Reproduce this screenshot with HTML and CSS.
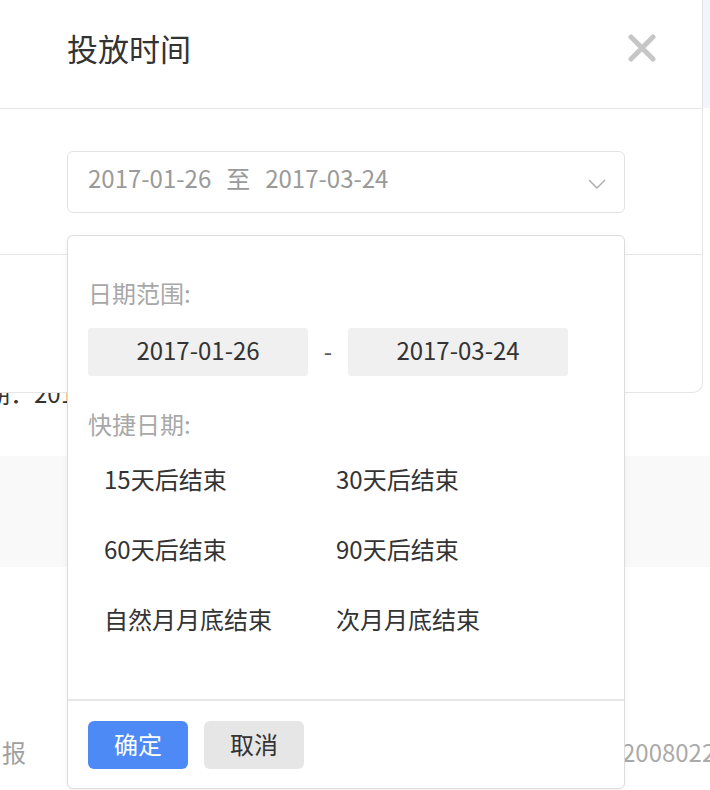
FILE: index.html
```html
<!DOCTYPE html>
<html lang="zh-CN">
<head>
  <meta charset="UTF-8" />
  <meta name="viewport" content="width=device-width, initial-scale=1.0"/>
  <title>投放时间</title>
  <link rel="stylesheet" href="styles.css">
</head>
<body>
  <div class="page">
    <div class="top">
      <div class="modal">
        <div class="modal-header">
          <h1 class="modal-title">投放时间</h1>
          <button class="close" aria-label="关闭">
            <svg width="28" height="28" viewBox="0 0 28 28">
              <path d="M3 3 L25 25 M25 3 L3 25" stroke="#c6c6c6" stroke-width="5" stroke-linecap="round" fill="none"/>
            </svg>
          </button>
        </div>
        <div class="modal-body">
          <div class="select" id="select">
            <span class="select-value">2017-01-26<span class="sep">至</span>2017-03-24</span>
            <svg class="chevron" width="18" height="10" viewBox="0 0 18 10">
              <polyline points="1,1 9,9 17,1" stroke="#aaa" stroke-width="1.4" fill="none"/>
            </svg>
          </div>
        </div>
        <div class="modal-section"></div>
      </div>
      <div class="side">
        <div class="side-head"></div>
      </div>
    </div>

    <div class="meta"><span>日期：2017-01-26</span></div>
    <div class="band"></div>
    <div class="foot">
      <span class="foot-left">报</span>
      <span class="foot-right">20080222</span>
    </div>

    <!-- date range dropdown -->
    <div class="popup" id="popup">
      <div class="popup-body">
        <div class="label">日期范围:</div>
        <div class="range">
          <div class="date-box">2017-01-26</div>
          <span class="dash">-</span>
          <div class="date-box">2017-03-24</div>
        </div>
        <div class="label label-quick">快捷日期:</div>
        <div class="quick">
          <div class="quick-item">15天后结束</div>
          <div class="quick-item">30天后结束</div>
          <div class="quick-item">60天后结束</div>
          <div class="quick-item">90天后结束</div>
          <div class="quick-item">自然月月底结束</div>
          <div class="quick-item">次月月底结束</div>
        </div>
      </div>
      <div class="popup-footer">
        <button class="btn btn-primary">确定</button>
        <button class="btn btn-default">取消</button>
      </div>
    </div>
  </div>
</body>
</html>
```

FILE: styles.css
```css
* {
  box-sizing: border-box;
}

body {
  margin: 0;
  width: 710px;
  height: 790px;
  overflow: hidden;
  background: #fff;
  font-family: 'Noto Sans CJK SC', 'Noto Sans', sans-serif;
  font-size: 24px;
  color: #333;
}

.page {
  position: relative;
  height: 790px;
}

.top {
  display: flex;
}

.modal {
  width: 703px;
  border-right: 1px solid #e6e6e6;
  border-bottom: 1px solid #e6e6e6;
  border-bottom-right-radius: 10px;
}

.modal-header {
  height: 109px;
  display: flex;
  justify-content: space-between;
  padding: 30px 46px 0 67px;
  border-bottom: 1px solid #e6e6e6;
}

.modal-title {
  margin: 0;
  font-size: 31px;
  font-weight: 400;
  line-height: 36px;
  color: #333;
}

.close {
  border: none;
  background: none;
  padding: 0;
  width: 28px;
  height: 28px;
  margin-top: 4px;
  cursor: pointer;
}

.modal-body {
  padding: 42px 0 41px 67px;
  border-bottom: 1px solid #e6e6e6;
}

.select {
  width: 558px;
  height: 62px;
  border: 1px solid #e3e3e3;
  border-radius: 6px;
  display: flex;
  align-items: center;
  justify-content: space-between;
  padding: 0 18px 8px 20px;
}

.select-value {
  color: #9a9a9a;
  line-height: 30px;
}

.sep {
  margin: 0 15px;
}

.chevron {
  margin-top: 12px;
}

.modal-section {
  height: 137px;
}

.side {
  flex: 1;
}

.side-head {
  height: 108px;
  background: #f2f6fc;
}

.meta {
  height: 12px;
  overflow: hidden;
  display: flex;
  align-items: flex-end;
  margin-left: -38px;
}

.meta span {
  line-height: 24px;
  white-space: nowrap;
}

.band {
  margin-top: 51px;
  height: 111px;
  background: #f9f9f9;
}

.foot {
  margin-top: 170px;
  display: grid;
  grid-template-columns: 622px 1fr;
  line-height: 30px;
  color: #a0a0a0;
  white-space: nowrap;
  overflow: hidden;
}

.foot-left {
  padding-left: 2px;
}

.foot-right {
  color: #aaa;
}

/* dropdown */
.popup {
  position: absolute;
  left: 67px;
  top: 235px;
  width: 558px;
  height: 554px;
  background: #fff;
  border: 1px solid #dcdcdc;
  border-radius: 6px;
  box-shadow: 0 2px 6px rgba(0, 0, 0, 0.05);
  display: flex;
  flex-direction: column;
}

.popup-body {
  flex: 1;
  padding: 40px 20px 0 20px;
}

.label {
  color: #a8a8a8;
  line-height: 34px;
}

.range {
  display: flex;
  align-items: center;
  margin-top: 18px;
}

.date-box {
  width: 220px;
  height: 48px;
  background: #f0f0f0;
  border-radius: 3px;
  display: flex;
  align-items: center;
  justify-content: center;
  padding-bottom: 6px;
  color: #333;
}

.dash {
  width: 40px;
  text-align: center;
  color: #555;
  padding-bottom: 4px;
}

.label-quick {
  margin-top: 31px;
}

.quick {
  display: grid;
  grid-template-columns: 232px 232px;
  margin-top: 3px;
  padding-left: 16px;
}

.quick-item {
  height: 70px;
  line-height: 70px;
  color: #333;
  cursor: pointer;
}

.popup-footer {
  border-top: 2px solid #e6e6e6;
  padding: 20px 20px 19px;
  display: flex;
  gap: 16px;
}

.btn {
  width: 100px;
  height: 48px;
  border: none;
  border-radius: 6px;
  font-family: inherit;
  font-size: 24px;
  padding: 0 0 4px;
  cursor: pointer;
}

.btn-primary {
  background: #4d8af6;
  color: #fff;
}

.btn-default {
  background: #e6e6e6;
  color: #333;
}
```
